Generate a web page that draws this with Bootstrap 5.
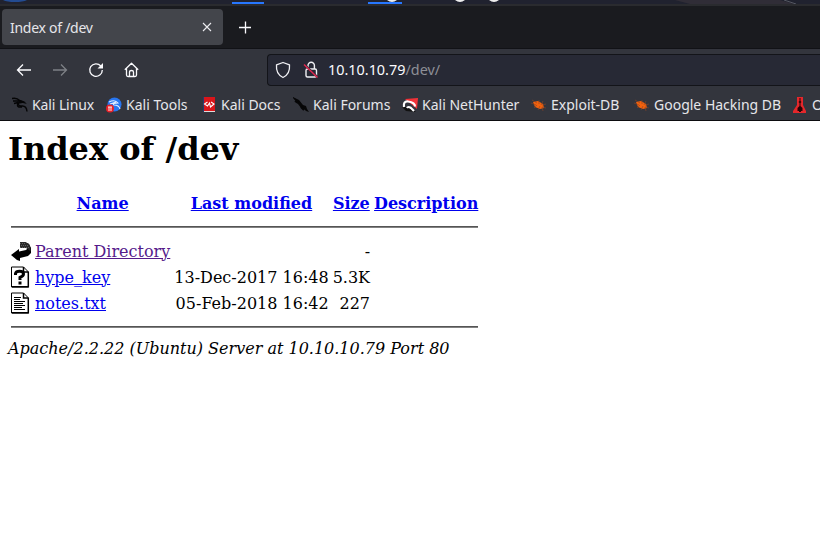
<!DOCTYPE html>
<html lang="en">
<head>
<meta charset="utf-8">
<title>Index of /dev</title>
<link href="https://cdn.jsdelivr.net/npm/bootstrap@5.3.0/dist/css/bootstrap.min.css" rel="stylesheet">
<style>
body{width:820px;height:544px;overflow:hidden;background:#fff;font-family:"Noto Sans",sans-serif}
.chrome-ui{color:#e6e6ea;font-size:14px;line-height:20px}
.desk{height:4px;background:#20222f}
.tabstrip{height:45px;background:#1a1b1f;border-top:2px solid #2a2b2f;border-bottom:1px solid #111216;padding-left:2px}
.browser-tab{width:221px;height:36px;margin-top:3px;background:#43454b;border-radius:4px;padding:0 9px 0 8px}
.tab-title{letter-spacing:-.27px;padding-top:1px}
.plus{margin:14px 0 0 15px}
.toolbar{height:41px;background:#33353d;padding-left:16px}
.tool-gap{margin-left:20px}
.address{height:32px;background:#272935;border:1px solid #131419;border-right:0;border-radius:4px 0 0 4px;margin-left:127px;padding-left:6px}
.address .lock{margin-left:10px}
.address .url{margin-left:8px;font-size:14.4px;color:#fbfbfe}
.address .path-part{color:#8e8f97}
.marks{height:31px;background:#33353d;border-bottom:1px solid #0c0c0f;padding-left:12px}
.mk{flex:none;display:flex;align-items:center;gap:4px;white-space:nowrap}
.tight{letter-spacing:-.1px}
svg{display:block;flex:none}
.doc{font-family:"DejaVu Serif",serif;font-size:16px;line-height:19px;color:#000;padding:10px 8px 0}
.doc h1{font-size:32px;line-height:37px;font-weight:700;margin:0 0 21px}
.doc a{color:#0000ee;text-decoration:underline}
.doc a.seen{color:#551a8b}
.listing{border-collapse:separate;border-spacing:2px}
.listing td,.listing th{padding:1px;white-space:nowrap;vertical-align:middle}
.listing th{text-align:center}
.listing hr{margin:8px 0;border:0;height:2px;opacity:1;background:linear-gradient(#555 50%,#828282 50%)}
.listing svg,.blank{width:20px;height:22px}
.num{text-align:right}
.doc address{margin:0;line-height:19px;font-style:italic}
</style>
<script src="https://cdn.jsdelivr.net/npm/bootstrap@5.3.0/dist/js/bootstrap.bundle.min.js"></script>
</head>
<body>
<div class="chrome-ui">
<div class="desk overflow-hidden"><svg width="820" height="4"><path d="M3 0h24q-4 2-12 2T3 0" fill="#234b91"/><path d="M232 2h32v2h-32zM368 2h34v2h-34z" fill="#2777ff"/><path d="M387 0h10q-5 4-10 0M455 0h10q-5 4-10 0M489 0h10q-5 4-10 0" fill="#eee"/><path d="M675 0h105l14 4H690z" fill="#302d37"/><path d="m784 0 12 4" stroke="#555762"/></svg></div>
<div class="tabstrip d-flex align-items-start">
 <div class="browser-tab d-flex align-items-center justify-content-between"><span class="tab-title">Index of /dev</span>
 <svg width="14" height="14" fill="none" stroke="#ececf0" stroke-width="1.1"><path d="m3 3 8 8m0-8-8 8"/></svg></div>
 <svg class="plus" width="14" height="14" fill="none" stroke="#fbfbfe" stroke-width="1.3"><path d="M1 7.5h12M7.5 1.500v12"/></svg>
</div>
<div class="toolbar d-flex align-items-center">
 <svg width="16" height="16" fill="none" stroke="#fbfbfe" stroke-width="1.3"><path d="M15 8H1.500M7 2.500 1.500 8 7 13.500"/></svg>
 <svg class="tool-gap" width="16" height="16" fill="none" stroke="#7e8086" stroke-width="1.3"><path d="M1 8h13.500M9 2.500 14.500 8 9 13.500"/></svg>
 <svg class="tool-gap" width="16" height="16" fill="none" stroke="#fbfbfe" stroke-width="1.3"><path d="M12.800 4A6.300 6.300 0 1 0 14.300 8"/><path d="M15 1v5.500H9.500z" fill="#fbfbfe" stroke="none"/></svg>
 <svg class="tool-gap" width="16" height="16" fill="none" stroke="#fbfbfe" stroke-width="1.3" stroke-linejoin="round"><path d="M.8 7.800 7.500 1.200l6.700 6.600M2.500 6.500V13q0 1.500 1.500 1.500h7q1.500 0 1.500-1.500V6.500M5.500 14.500V10q0-1.500 2-1.500t2 1.500v4.500"/></svg>
 <div class="address d-flex align-items-center flex-grow-1">
  <svg width="18" height="18" fill="none" stroke="#f0f0f4" stroke-width="1.3" stroke-linejoin="round"><path d="m9 1.500 6.500 2.400q.8 9.200-6.500 12.600Q1.700 13.100 2.500 3.900z"/></svg>
  <svg class="lock" width="18" height="18" fill="none" stroke="#f0f0f4" stroke-width="1.400"><rect x="4" y="8" width="10.500" height="8" rx="1.500"/><path d="M6 8V4.500a3.200 3.200 0 0 1 6.400 0V8"/><path d="m3 4 13.500 13" stroke="#272935" stroke-width="2"/><path d="m2 3.500 13.500 13" stroke="#e22850" stroke-width="1.500"/></svg>
  <span class="url">10.10.10.79<span class="path-part">/dev/</span></span>
 </div>
</div>
<div class="marks d-flex align-items-center overflow-hidden">
 <div class="mk tight" style="width:94px"><svg width="16" height="16" fill="none" stroke="#050506" stroke-width="1.400"><path d="M0 1.500q5-1 7.500 2l4 1.500-5 1q-1 3 4 3 4 0 4.500 5.500M1 4h6M2 6.500l4-1M6 6q-2 5 4 4"/><path d="m7 3 4 1 4 3-4-1-5 0z" fill="#050506" stroke="none"/></svg><span>Kali Linux</span></div>
 <div class="mk" style="width:95px"><svg width="16" height="16"><circle cx="8.500" cy="7.500" r="7" fill="#2876f0"/><path d="M3 5q6-3 9 1-6 0-4 2 5 0 6 4M4 7l6-2" fill="none" stroke="#e0edff" stroke-width="1.100"/><circle cx="4" cy="11.500" r="4" fill="#e92027"/><path d="M2 10h4M3 10v4M5 10v4" stroke="#fff" stroke-width=".9"/></svg><span>Kali Tools</span></div>
 <div class="mk" style="width:92px"><svg width="16" height="16"><path d="M2 0h12v15H2z" fill="#d9151a"/><path d="M2 0h1v15H2z" fill="#263a70"/><path d="M3 14h11v1H3z" fill="#ddd"/><path d="m6.500 5-3 2 3 2 2-3 1 4 3.500-3-3-2" fill="none" stroke="#fff" stroke-width="1.100"/></svg><span>Kali Docs</span></div>
 <div class="mk" style="width:109px"><svg width="16" height="16"><path d="m0 0 6 3 4 5 3 1 1 3 2 3-3-1-2-2-3-1-3-4L0 1z" fill="#060607"/><path d="m2 4 3 2m3 4 3 3" stroke="#060607" stroke-width="2"/></svg><span>Kali Forums</span></div>
 <div class="mk" style="width:129px"><svg width="16" height="16"><path d="m3 2 13-1-1 11z" fill="#f23238"/><path d="m0 10 4 4 10 1-6-5z" fill="#111"/><path d="M2 10Q1 4 6 4.500q7 1 7 5M5 11q1-2 4 0l3 3" fill="none" stroke="#fff" stroke-width="2.200"/></svg><span>Kali NetHunter</span></div>
 <div class="mk" style="width:103px"><svg width="16" height="16"><path d="m2 5 5-1 5 3 1 4-4 1-5-2z" fill="#f2610d"/><path d="m1 3 5 3M0 6l5 2M3 11l3-3M7 13l2-4M12 14l-1-4M15 11l-4-1M15 7l-4 1M12 4l-2 4M8 3v4" stroke="#8c4525" stroke-width=".6"/></svg><span>Exploit-DB</span></div>
 <div class="mk" style="width:158px"><svg width="16" height="16"><path d="m2 5 5-1 5 3 1 4-4 1-5-2z" fill="#f2610d"/><path d="m1 3 5 3M0 6l5 2M3 11l3-3M7 13l2-4M12 14l-1-4M15 11l-4-1M15 7l-4 1M12 4l-2 4M8 3v4" stroke="#8c4525" stroke-width=".6"/></svg><span>Google Hacking DB</span></div>
 <div class="mk"><svg width="16" height="16"><path d="M5 0h6v8l3 6v2H1v-2l4-6z" fill="#e5272b"/><path d="M7.500 1h1v3l1 1-1 1v3l2 2v3H9v1H7v-1H5.500v-3l2-2V6l-1-1 1-1z" fill="#250506"/></svg><span>OffSec</span></div>
</div>
</div>
<main class="doc">
<h1>Index of /dev</h1>
<table class="listing">
<tr><th><div class="blank"></div></th><th><a href="#">Name</a></th><th><a href="#">Last modified</a></th><th><a href="#">Size</a></th><th><a href="#">Description</a></th></tr>
<tr><td colspan="5"><hr></td></tr>
<tr><td><svg viewBox="0 0 20 22"><path d="M9 2h5l4 2 2 4v5l-3 3-8 2v3l-3-1-6-5 8-6v2.500l7-1.500 2-2z"/><path d="M9 2h5l4 2 1.500 4v3L15 8H9z" fill="#2b2b2b"/><path d="M9 3.500h6M10 5.500h8M9 7.500h9" stroke="#777" stroke-width=".7" stroke-dasharray="1 1"/></svg></td><td><a class="seen" href="#">Parent Directory</a></td><td></td><td class="num">-</td><td></td></tr>
<tr><td><svg viewBox="0 0 20 22"><path d="M.5 1h12l5 5v15H.5z" fill="#fff" stroke="#000"/><path d="M12.500 1v5h5M17.300 6v14.800H1" fill="none" stroke="#000" stroke-width="1.500"/><path d="M4.500 9V7.500Q5 5.300 8.500 5.300q4 0 4 2.700 0 2-3.500 3.500v2.500" fill="none" stroke="#000" stroke-width="3"/><path d="M7.500 15.500h3v3h-3z"/></svg></td><td><a href="#">hype_key</a></td><td class="num">13-Dec-2017 16:48</td><td class="num">5.3K</td><td></td></tr>
<tr><td><svg viewBox="0 0 20 22"><path d="M.5 1h12l5 5v15H.5z" fill="#fff" stroke="#000"/><path d="M12.500 1v5h5M17.300 6v14.800H1" fill="none" stroke="#000" stroke-width="1.500"/><path d="M3 5.500h7M3 7.500h6M3 9.500h11M3 11.500h9M3 13.500h11M3 15.500h8M3 17.500h11" stroke="#000"/></svg></td><td><a href="#">notes.txt</a></td><td class="num">05-Feb-2018 16:42</td><td class="num">227</td><td></td></tr>
<tr><td colspan="5"><hr></td></tr>
</table>
<address>Apache/2.2.22 (Ubuntu) Server at 10.10.10.79 Port 80</address>
</main>
</body>
</html>
